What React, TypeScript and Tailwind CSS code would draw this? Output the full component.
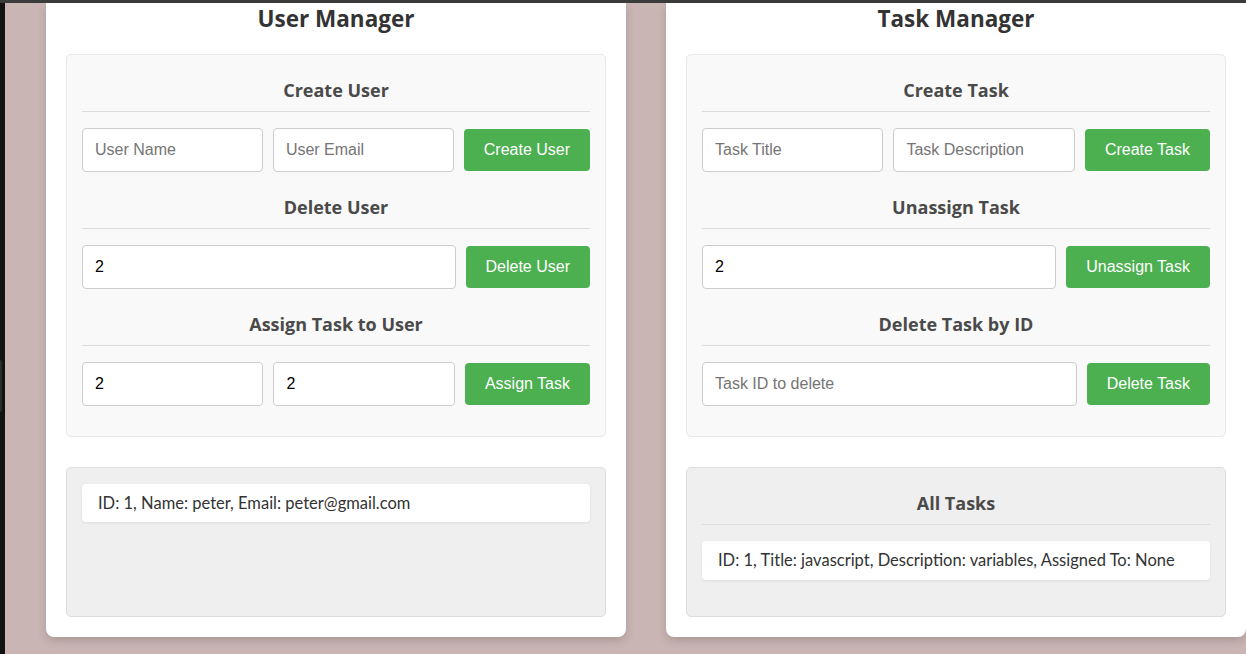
import { useState } from "react";

type User = { id: number; name: string; email: string };
type Task = {
  id: number;
  title: string;
  description: string;
  assignedTo: number | null;
};

const font = "font-['Lato','Noto_Sans',sans-serif]";
const headFont = "font-['Open_Sans','Noto_Sans',sans-serif]";
const inputCls =
  "min-w-0 flex-1 rounded-[4px] border border-[#cccccc] bg-white px-3 py-3 font-['Liberation_Sans',Arial,sans-serif] text-[16px] leading-[18px] text-black placeholder:text-[#757575] outline-none";
const btnCls =
  "shrink-0 rounded-[4px] bg-[#4caf50] px-5 py-3 font-['Liberation_Sans',Arial,sans-serif] text-[16px] leading-[18px] text-white hover:bg-[#45a049]";

function Heading({ children, first }: { children: React.ReactNode; first?: boolean }) {
  return (
    <h3
      className={`${first ? "" : "mt-[24px]"} mb-[16px] border-b border-[#dddddd] pb-[10px] text-center ${headFont} text-[18px] font-bold leading-[22px] text-[#4a4a4a]`}
    >
      {children}
    </h3>
  );
}

export default function App() {
  const [users] = useState<User[]>([
    { id: 1, name: "peter", email: "peter@gmail.com" },
  ]);
  const [tasks] = useState<Task[]>([
    { id: 1, title: "javascript", description: "variables", assignedTo: null },
  ]);

  const [userName, setUserName] = useState("");
  const [userEmail, setUserEmail] = useState("");
  const [deleteUserId, setDeleteUserId] = useState("2");
  const [assignUserId, setAssignUserId] = useState("2");
  const [assignTaskId, setAssignTaskId] = useState("2");

  const [taskTitle, setTaskTitle] = useState("");
  const [taskDesc, setTaskDesc] = useState("");
  const [unassignId, setUnassignId] = useState("2");
  const [deleteTaskId, setDeleteTaskId] = useState("");

  return (
    <div className={`flex h-[654px] flex-col overflow-hidden bg-[#c9b5b4] ${font}`}>
      {/* window chrome */}
      <div className="h-[3px] shrink-0 bg-[#3b3b3b]" />
      <div className="flex min-h-0 flex-1">
        <div className="relative w-[5px] shrink-0 bg-[#121212]">
          <div className="absolute left-0 top-[357px] h-[52px] w-[2px] rounded-r bg-[#2c2c2c]" />
        </div>

        <div className="flex items-start gap-[40px] pl-[41px]">
          {/* User Manager */}
          <div className="w-[580px] shrink-0 rounded-b-[8px] bg-white px-5 pb-5 pt-[1px] shadow-[0_4px_10px_rgba(0,0,0,0.15)]">
            <h2 className={`mb-[20px] text-center ${headFont} text-[22.5px] font-bold leading-[30px] text-[#333333]`}>
              User Manager
            </h2>

            <div className="rounded-[5px] border border-[#e8e8e8] bg-[#f9f9f9] px-[15px] pb-[30px] pt-[24px]">
              <Heading first>Create User</Heading>
              <div className="flex items-center gap-[10px]">
                <input
                  className={inputCls}
                  placeholder="User Name"
                  value={userName}
                  onChange={(e) => setUserName(e.target.value)}
                />
                <input
                  className={inputCls}
                  placeholder="User Email"
                  value={userEmail}
                  onChange={(e) => setUserEmail(e.target.value)}
                />
                <button className={btnCls}>Create User</button>
              </div>

              <Heading>Delete User</Heading>
              <div className="flex items-center gap-[10px]">
                <input
                  className={inputCls}
                  placeholder="User ID to delete"
                  value={deleteUserId}
                  onChange={(e) => setDeleteUserId(e.target.value)}
                />
                <button className={btnCls}>Delete User</button>
              </div>

              <Heading>Assign Task to User</Heading>
              <div className="flex items-center gap-[10px]">
                <input
                  className={inputCls}
                  placeholder="User ID"
                  value={assignUserId}
                  onChange={(e) => setAssignUserId(e.target.value)}
                />
                <input
                  className={inputCls}
                  placeholder="Task ID"
                  value={assignTaskId}
                  onChange={(e) => setAssignTaskId(e.target.value)}
                />
                <button className={btnCls}>Assign Task</button>
              </div>
            </div>

            <div className="mt-[30px] h-[150px] rounded-[5px] border border-[#dddddd] bg-[#efefef] px-[15px] pt-4">
              {users.map((u) => (
                <div
                  key={u.id}
                  className="rounded-[4px] bg-white px-4 py-[9px] text-[16.5px] leading-[20px] text-[#333333] shadow-[0_1px_3px_rgba(0,0,0,0.08)]"
                >
                  ID: {u.id}, Name: {u.name}, Email: {u.email}
                </div>
              ))}
            </div>
          </div>

          {/* Task Manager */}
          <div className="w-[580px] shrink-0 rounded-b-[8px] bg-white px-5 pb-5 pt-[1px] shadow-[0_4px_10px_rgba(0,0,0,0.15)]">
            <h2 className={`mb-[20px] text-center ${headFont} text-[22.5px] font-bold leading-[30px] text-[#333333]`}>
              Task Manager
            </h2>

            <div className="rounded-[5px] border border-[#e8e8e8] bg-[#f9f9f9] px-[15px] pb-[30px] pt-[24px]">
              <Heading first>Create Task</Heading>
              <div className="flex items-center gap-[10px]">
                <input
                  className={inputCls}
                  placeholder="Task Title"
                  value={taskTitle}
                  onChange={(e) => setTaskTitle(e.target.value)}
                />
                <input
                  className={inputCls}
                  placeholder="Task Description"
                  value={taskDesc}
                  onChange={(e) => setTaskDesc(e.target.value)}
                />
                <button className={btnCls}>Create Task</button>
              </div>

              <Heading>Unassign Task</Heading>
              <div className="flex items-center gap-[10px]">
                <input
                  className={inputCls}
                  placeholder="Task ID to unassign"
                  value={unassignId}
                  onChange={(e) => setUnassignId(e.target.value)}
                />
                <button className={btnCls}>Unassign Task</button>
              </div>

              <Heading>Delete Task by ID</Heading>
              <div className="flex items-center gap-[10px]">
                <input
                  className={inputCls}
                  placeholder="Task ID to delete"
                  value={deleteTaskId}
                  onChange={(e) => setDeleteTaskId(e.target.value)}
                />
                <button className={btnCls}>Delete Task</button>
              </div>
            </div>

            <div className="mt-[30px] h-[150px] rounded-[5px] border border-[#dddddd] bg-[#efefef] px-[15px] pt-[24px]">
              <Heading first>All Tasks</Heading>
              {tasks.map((t) => (
                <div
                  key={t.id}
                  className="rounded-[4px] bg-white px-4 py-[9px] text-[16.5px] leading-[21px] text-[#333333] shadow-[0_1px_3px_rgba(0,0,0,0.08)]"
                >
                  ID: {t.id}, Title: {t.title}, Description: {t.description},
                  Assigned To: {t.assignedTo ?? "None"}
                </div>
              ))}
            </div>
          </div>
        </div>
      </div>
    </div>
  );
}
